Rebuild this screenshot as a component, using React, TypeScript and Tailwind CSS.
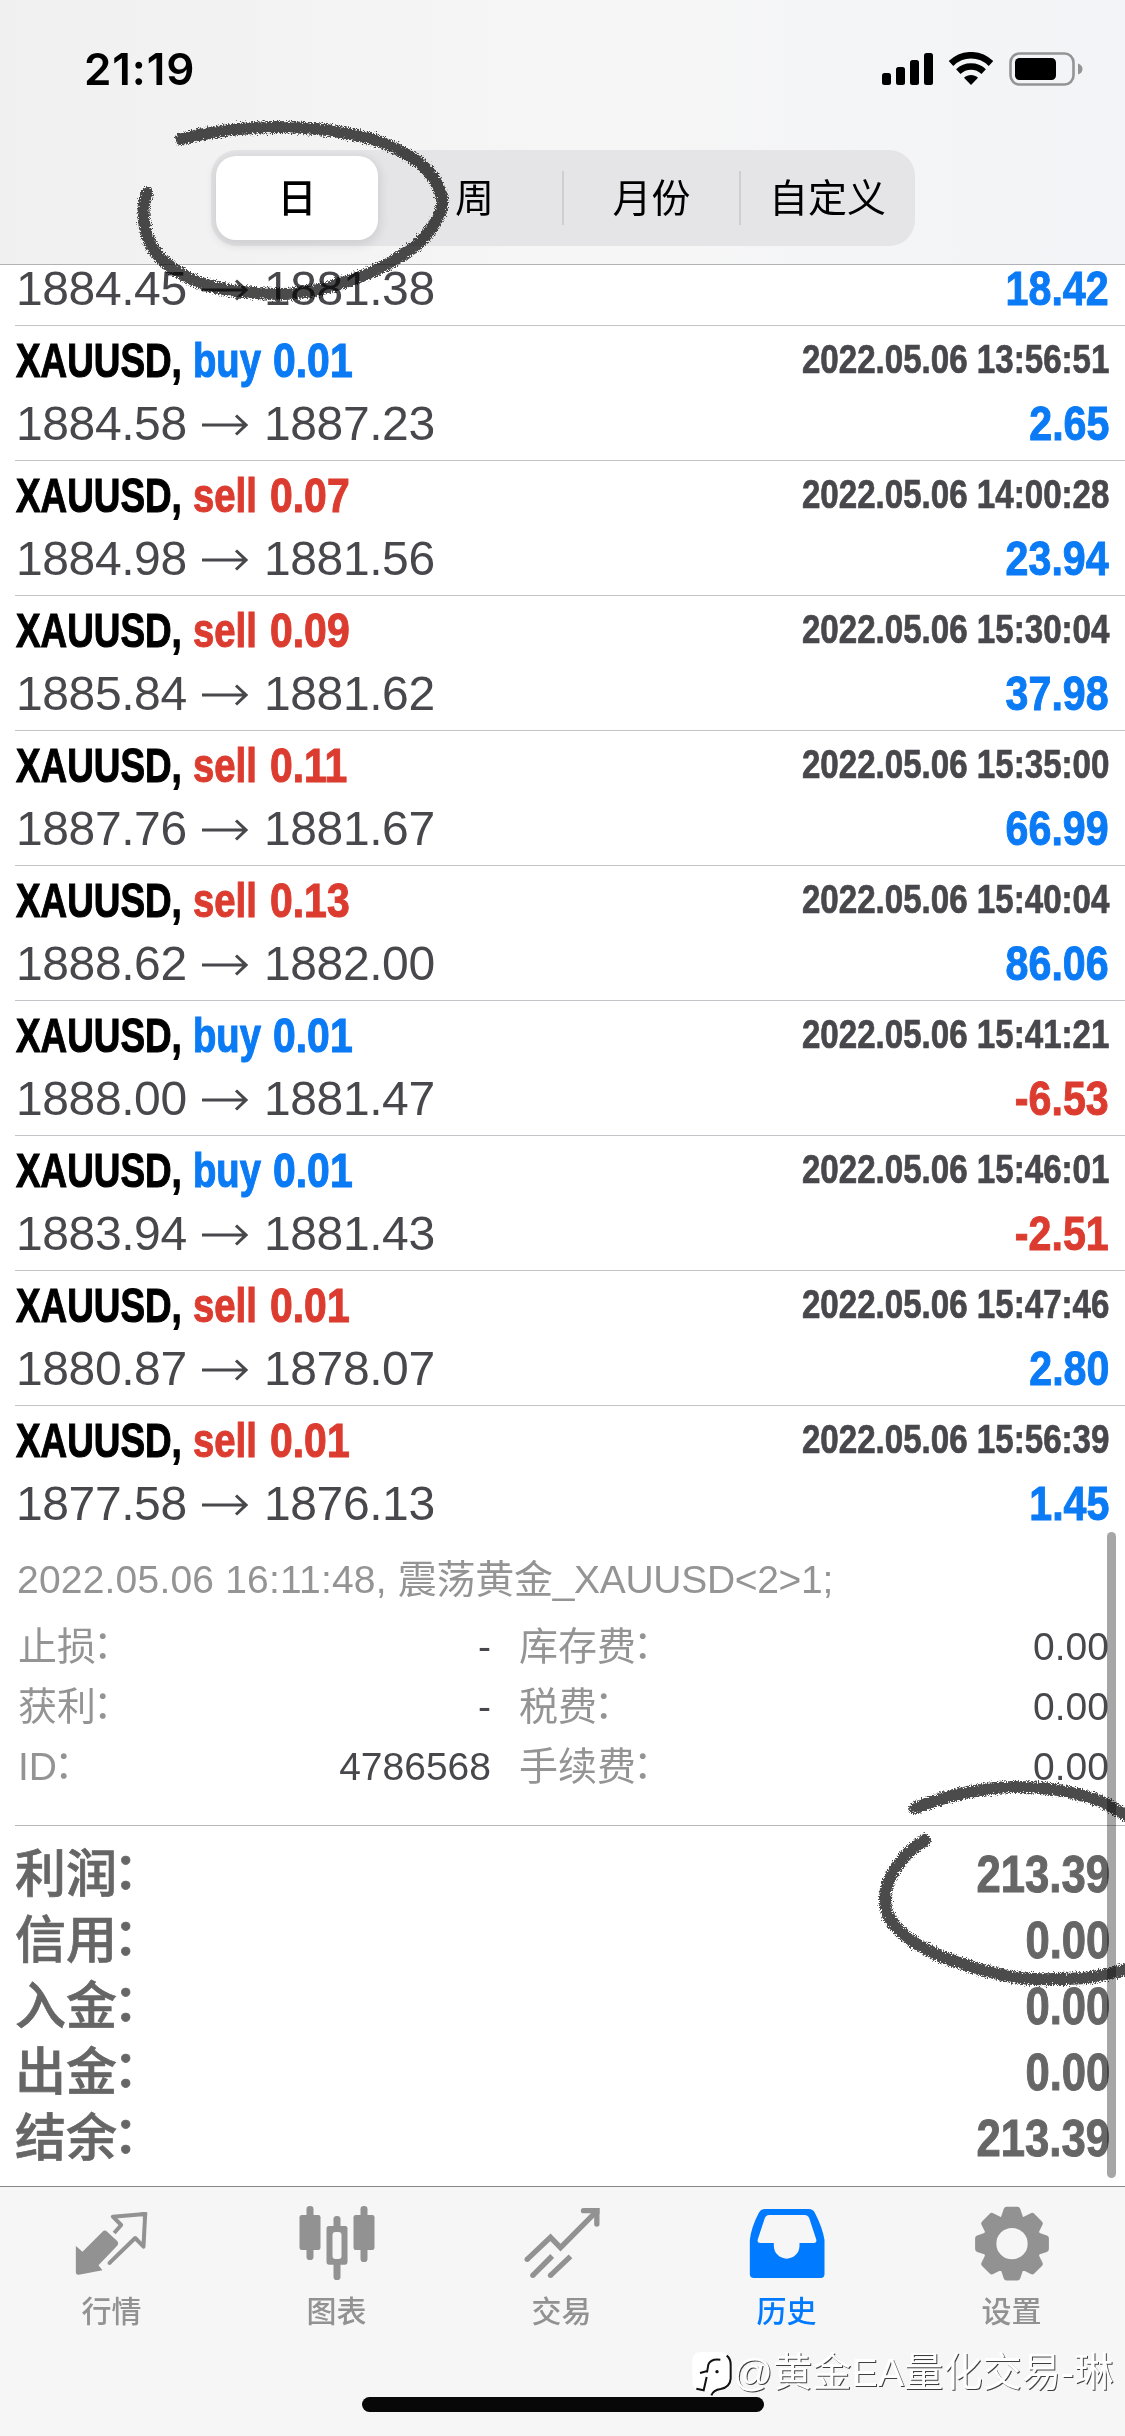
import React from 'react';
import clsx from 'clsx';

// --- DATA ---

type Deal = {
  open: string;
  close: string;
  profit: string;
  side?: 'buy' | 'sell';
  volume?: string;
  time?: string;
};

// The first deal is scrolled half way under the header, only its prices show
const deals: Deal[] = [
  { open: '1884.45', close: '1881.38', profit: '18.42' },
  { side: 'buy', volume: '0.01', time: '2022.05.06 13:56:51', open: '1884.58', close: '1887.23', profit: '2.65' },
  { side: 'sell', volume: '0.07', time: '2022.05.06 14:00:28', open: '1884.98', close: '1881.56', profit: '23.94' },
  { side: 'sell', volume: '0.09', time: '2022.05.06 15:30:04', open: '1885.84', close: '1881.62', profit: '37.98' },
  { side: 'sell', volume: '0.11', time: '2022.05.06 15:35:00', open: '1887.76', close: '1881.67', profit: '66.99' },
  { side: 'sell', volume: '0.13', time: '2022.05.06 15:40:04', open: '1888.62', close: '1882.00', profit: '86.06' },
  { side: 'buy', volume: '0.01', time: '2022.05.06 15:41:21', open: '1888.00', close: '1881.47', profit: '-6.53' },
  { side: 'buy', volume: '0.01', time: '2022.05.06 15:46:01', open: '1883.94', close: '1881.43', profit: '-2.51' },
  { side: 'sell', volume: '0.01', time: '2022.05.06 15:47:46', open: '1880.87', close: '1878.07', profit: '2.80' },
  { side: 'sell', volume: '0.01', time: '2022.05.06 15:56:39', open: '1877.58', close: '1876.13', profit: '1.45' },
];

const details = [
  ['止损', '-', '库存费', '0.00'],
  ['获利', '-', '税费', '0.00'],
  ['ID', '4786568', '手续费', '0.00'],
];

const summary = [
  ['利润', '213.39'],
  ['信用', '0.00'],
  ['入金', '0.00'],
  ['出金', '0.00'],
  ['结余', '213.39'],
];

// --- ICONS ---

const QuotesIcon = () => (
  <svg viewBox="211.5 36 252 252" className="size-[84px]" fill="none">
    <path
      fill="currentColor"
      d="M226 168L246 185L306 125Q313 118 320 125L350 153Q356 160 350 167L294 226L306 241L235 254Q226 255 226 246Z"
    />
    <path stroke="currentColor" strokeWidth="12" d="M341 129L362 105L337 80L434 72L429 170L404 144L328 218" strokeLinejoin="round" />
    <path stroke="currentColor" strokeWidth="12" d="M420 73H434L433 86" />
    <circle cx="327" cy="219" r="6" fill="currentColor" />
  </svg>
);

const ChartIcon = () => (
  <svg viewBox="886.5 36 252 252" className="size-[84px]" fill="currentColor">
    <rect x="918" y="48" width="21" height="162" rx="10" />
    <rect x="897" y="75" width="63" height="105" rx="7" />
    <rect x="1080" y="48" width="21" height="168" rx="10" />
    <rect x="1059" y="75" width="63" height="105" rx="7" />
    <rect x="999" y="78" width="21" height="44" rx="10" />
    <rect x="999" y="212" width="21" height="58" rx="10" />
    <path
      fillRule="evenodd"
      d="M985 108h49q7 0 7 7v102q0 7-7 7h-49q-7 0-7-7v-102q0-7 7-7zM1005 126q-9 0-9 9v63q0 9 9 9h9q9 0 9-9v-63q0-9-9-9z"
    />
  </svg>
);

const TradeIcon = () => (
  <svg viewBox="61.5 36 252 252" className="size-[84px]" fill="none" stroke="currentColor" strokeWidth="16">
    <path d="M80 208L150 142L180 173L288 64" />
    <path d="M249 62H289V102" strokeLinecap="round" />
    <path d="M97 256L155 198M150 256L210 199" />
    <g fill="currentColor" stroke="none">
      <circle cx="80" cy="208" r="8" />
      <circle cx="97" cy="256" r="8" />
      <circle cx="150" cy="256" r="8" />
      <path d="M297 54V72H280V54Z" />
    </g>
  </svg>
);

const HistoryIcon = () => (
  <svg viewBox="736.5 36 252 252" className="size-[84px]" fill="currentColor">
    <path
      fillRule="evenodd"
      d="M748 150Q752 112 775 68Q781 57 793 57H925Q937 57 943 68Q966 112 972 150V252Q972 264 960 264H760Q748 264 748 252ZM806 75Q797 75 793 84L772 148Q769 159 780 159H820V167A38.5 39 0 0 0 897 167V159H939Q950 159 947 148L926 84Q922 75 912 75Z"
    />
  </svg>
);

const gearPoints = Array.from({ length: 8 })
  .flatMap((_, i) =>
    [
      [-18, 80],
      [-9, 103],
      [9, 103],
      [18, 80],
    ].map(([deg, r]) => {
      const a = ((i * 45 + deg - 90) * Math.PI) / 180;
      return `${(123 + r * Math.cos(a)).toFixed(1)},${(125 + r * Math.sin(a)).toFixed(1)}`;
    })
  )
  .join(' ');

const SettingsIcon = () => (
  <svg viewBox="0 0 252 252" className="size-[84px]">
    <polygon points={gearPoints} fill="currentColor" stroke="currentColor" strokeWidth="18" strokeLinejoin="round" />
    <circle cx="123" cy="125" r="47" fill="#f6f6f6" />
  </svg>
);

const tabs = [
  { label: '行情', Icon: QuotesIcon },
  { label: '图表', Icon: ChartIcon },
  { label: '交易', Icon: TradeIcon },
  { label: '历史', Icon: HistoryIcon, active: true },
  { label: '设置', Icon: SettingsIcon },
];

// --- SECTIONS ---

const StatusBar = () => (
  <div className="flex h-[138px] items-center justify-between pl-[84px] pr-[42px]">
    <span className="font-[Inter] text-[44px] font-semibold leading-none tracking-[0.9px]">21:19</span>
    <div className="flex items-center">
      <svg className="h-[34px] w-[52px]" viewBox="0 0 52 34">
        <rect x="0" y="21" width="9" height="12" rx="2.5" />
        <rect x="14" y="15" width="9" height="18" rx="2.5" />
        <rect x="28" y="8" width="9" height="25" rx="2.5" />
        <rect x="42" y="1" width="9" height="32" rx="2.5" />
      </svg>
      <svg className="ml-[14px] h-[34px] w-[46px]" viewBox="0 0 46 34" fill="none" stroke="#000">
        <path d="M3 11.5C14.5 0.5 31.5 0.5 43 11.5" strokeWidth="6.6" />
        <path d="M10.3 19.6C17.5 12.8 28.5 12.8 35.7 19.6" strokeWidth="6.4" />
        <path d="M23 33L16 25.8C20 22.2 26 22.2 30 25.8Z" fill="#000" stroke="none" />
      </svg>
      <svg className="ml-[15px] h-[34px] w-[74px]" viewBox="0 0 74 34">
        <rect x="1.5" y="1.5" width="63" height="31" rx="9" fill="none" stroke="#949496" strokeWidth="2.6" />
        <rect x="6" y="6" width="41" height="22" rx="4.5" />
        <path d="M69 11.5Q73.5 13 73.5 17T69 22.5Z" fill="#949496" />
      </svg>
    </div>
  </div>
);

const PeriodSwitch = () => (
  <div className="ml-[211px] mt-[12px] flex h-[96px] w-[704px] items-center rounded-[26px] bg-[#e5e4e6] text-[39px]">
    <div className="flex h-full w-[176px] items-center py-[6px] pl-[5px] pr-[9px]">
      <div className="flex size-full items-center justify-center rounded-[20px] bg-white pt-[2px] font-medium shadow-[0_3px_10px_3px_rgba(0,0,0,0.09)]">日</div>
    </div>
    <div className="flex w-[175px] justify-center pt-[2px]">周</div>
    <div className="h-[54px] w-[2px] bg-[#cfcfd2]" />
    <div className="flex w-[175px] justify-center pt-[2px]">月份</div>
    <div className="h-[54px] w-[2px] bg-[#cfcfd2]" />
    <div className="flex w-[173px] justify-center pt-[2px]">自定义</div>
  </div>
);

const DealRow: React.FC<{ deal: Deal; last?: boolean }> = ({ deal, last }) => {
  const sideColor = deal.side === 'buy' ? 'text-[#0a7af5]' : 'text-[#dc3c30]';
  const profitColor = deal.profit.startsWith('-') ? 'text-[#dc3c30]' : 'text-[#0a7af5]';
  return (
    <div className={clsx('shrink-0', !deal.time && '-mt-[11px]')}>
      <div className={clsx('px-[16px] pt-[3px] text-[49px] leading-[63px] text-[#48474c]', deal.time ? 'h-[134px]' : 'h-[71px]')}>
        {deal.time && (
          <div className="flex h-[63px] items-center justify-between whitespace-nowrap font-bold">
            <div className="flex [-webkit-text-stroke:1.1px]">
              <span className="w-[177px] origin-left scale-x-[0.752] text-black">XAUUSD,</span>
              <span className={clsx('origin-left scale-x-[0.78]', sideColor, deal.side === 'buy' ? 'w-[80px]' : 'w-[77px]')}>{deal.side}</span>
              <span className={clsx('origin-left scale-x-[0.835]', sideColor)}>{deal.volume}</span>
            </div>
            <span className="-mt-[2px] origin-right scale-x-[0.828] text-[40px] [-webkit-text-stroke:0.7px]">{deal.time}</span>
          </div>
        )}
        <div className="flex items-center justify-between">
          <div className="flex items-center text-[48px] tracking-[-0.4px]">
            <span className="w-[186px]">{deal.open}</span>
            <svg className="mt-[2px] h-[22px] w-[46px]" viewBox="0 0 46 22" fill="none" stroke="currentColor" strokeWidth="3">
              <path d="M0 11H44M34 1.5L44 11L34 20.5" />
            </svg>
            <span className="ml-[16px]">{deal.close}</span>
          </div>
          <span className={clsx('origin-right scale-x-[0.84] font-bold [-webkit-text-stroke:1px]', profitColor)}>{deal.profit}</span>
        </div>
      </div>
      {!last && <div className="ml-[15px] h-px bg-[#c4c4c8]" />}
    </div>
  );
};

const DealDetails = () => (
  <div className="shrink-0 pt-[10px] text-[39px] leading-[60px] text-[#949494]">
    <div className="h-[60px] whitespace-nowrap pl-[17px]">
      <span className="tracking-[0.2px]">2022.05.06 16:11:48, </span>
      <span className="tracking-[-0.3px]">震荡黄金_XAUUSD&lt;2&gt;1;</span>
    </div>
    <div className="mb-[28px] mt-[7px]">
      {details.map(([label, value, label2, value2]) => (
        <div key={label} className="flex h-[60px] pl-[18px] pr-[16px]">
          <span className="flex-none">
            {label}
            <span className="inline-block -translate-x-[3px] -translate-y-[2px]">：</span>
          </span>
          <span className="ml-auto text-[#48474c]">{value}</span>
          <div className="ml-[28px] flex w-[590px] justify-between">
            <span>
              {label2}
              <span className="inline-block -translate-x-[3px] -translate-y-[2px]">：</span>
            </span>
            <span className="text-[#48474c]">{value2}</span>
          </div>
        </div>
      ))}
    </div>
    <div className="ml-[15px] h-px bg-[#b8b8bb]" />
  </div>
);

const Summary = () => (
  <div className="shrink-0 pt-[16px] text-[51px] font-bold leading-[66px] text-[#666]">
    {summary.map(([label, value]) => (
      <div key={label} className="flex h-[66px] justify-between pl-[15px] pr-[15px]">
        <span className="font-medium [-webkit-text-stroke:0.7px]">
          {label}
          <span className="inline-block -translate-x-[4px] -translate-y-[3px]">：</span>
        </span>
        <span className="origin-right scale-x-[0.855] [-webkit-text-stroke:1px]">{value}</span>
      </div>
    ))}
  </div>
);

const TabBar = () => (
  <div className="mt-auto h-[250px] shrink-0 border-t border-[#85858a] bg-[#f6f6f6]">
    <div className="flex pt-[15px]">
      {tabs.map(({ label, Icon, active }) => (
        <div key={label} className={clsx('flex w-[225px] flex-col items-center', active ? 'text-[#007aff]' : 'text-[#929292]')}>
          <Icon />
          <span className="mr-[2px] mt-[8px] text-[30px] font-medium leading-[36px]">{label}</span>
        </div>
      ))}
    </div>
    <div className="mx-auto mt-[67px] h-[15px] w-[402px] rounded-full bg-[#080808]" />
  </div>
);

// Hand-drawn marker strokes lying over the page
const Scribbles = () => (
  <svg className="pointer-events-none absolute inset-0 h-[2436px] w-[1125px] mix-blend-multiply" viewBox="0 0 1125 2436" fill="none">
    <defs>
      <filter id="rough" x="-5%" y="-5%" width="110%" height="110%">
        <feTurbulence type="fractalNoise" baseFrequency="0.8" numOctaves="2" seed="4" />
        <feDisplacementMap in="SourceGraphic" scale="8" xChannelSelector="R" yChannelSelector="G" />
      </filter>
    </defs>
    <g stroke="#4c4b4b" strokeWidth="12" strokeLinecap="round" filter="url(#rough)">
      <path d="M181 139C213 131 246 127 279 127C311 127 340 131 368 138C383 142 392 146 404 153C415 159 423 165 429 172C437 181 440 189 442 198C444 212 434 227 421 241C410 251 399 258 386 265C371 273 356 279 339 284C325 289 311 292 296 293C283 295 270 294 257 293C237 292 218 289 200 283C188 278 177 272 168 265C157 256 150 246 146 233C143 219 142 204 147 193" />
      <path d="M915 1808C931 1802 944 1797 960 1794C978 1790 996 1787 1014 1787C1032 1787 1048 1788 1064 1791C1077 1794 1089 1797 1100 1801C1111 1806 1121 1813 1135 1820" />
      <path d="M925 1840C915 1846 907 1853 901 1861C892 1872 885 1885 885 1899C885 1910 889 1920 897 1928C905 1937 914 1943 924 1948C936 1955 947 1959 960 1963C974 1968 988 1972 1003 1975C1020 1979 1037 1980 1054 1979C1067 1979 1080 1979 1093 1977C1105 1975 1117 1972 1135 1967" />
    </g>
  </svg>
);

const Watermark = () => (
  <div className="absolute left-[692px] top-[2342px] flex items-center">
    <svg className="mt-[5px] h-[50px] w-[44px]" viewBox="576 486 132 150" fill="none">
      <path fill="#fff" d="M604 492H660Q690 492 690 522V575Q690 607 655 607L630 622L627 609H600Q577 607 577 580V520Q577 492 604 492Z" />
      <g stroke="#111" strokeWidth="6">
        <path d="M680 503Q692 512 692 530V572Q690 598 662 603Q640 606 634 622" />
        <path d="M661 515Q632 511 625 530L621 553M600 555L622 549M620 567L611 607L589 602" />
      </g>
      <circle cx="651" cy="551" r="5" fill="#111" />
    </svg>
    <span className="-ml-[3px] whitespace-nowrap text-[39.3px] leading-[60px] text-white [text-shadow:1px_1px_0_rgba(0,0,0,0.75)]">
      @黄金EA量化交易-琳
    </span>
  </div>
);

export default function App() {
  return (
    <div className="relative flex h-[2436px] w-[1125px] flex-col overflow-hidden bg-white font-['Liberation_Sans','Noto_Sans_CJK_SC',sans-serif] text-black">
      <header className="h-[265px] shrink-0 border-b border-[#b2b2b4] bg-linear-to-r from-[#f1f0f1] via-[#f6f6f6] to-[#f3f4f7]">
        <StatusBar />
        <PeriodSwitch />
      </header>
      <main className="flex flex-col">
        {deals.map((deal, i) => (
          <DealRow key={deal.open} deal={deal} last={i === deals.length - 1} />
        ))}
        <DealDetails />
        <Summary />
      </main>
      <TabBar />
      <div className="absolute left-[1107px] top-[1532px] h-[646px] w-[9px] rounded-full bg-black/35" />
      <Scribbles />
      <Watermark />
    </div>
  );
}
